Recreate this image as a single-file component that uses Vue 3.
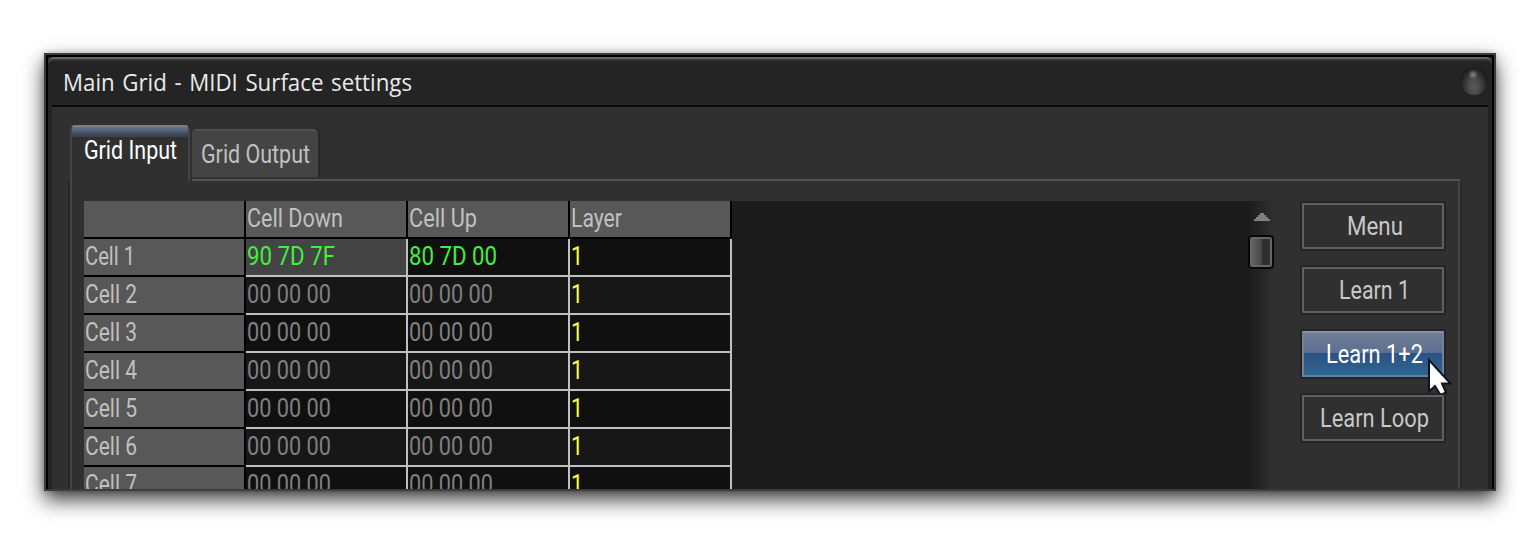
<script setup>
import { h } from 'vue'

// Text run condensed or widened to a fixed width
const Label = (p) =>
  h('svg', { class: 'label', width: p.w, height: 36 }, [
    h('text', { x: 0, y: 26, textLength: p.w, lengthAdjust: 'spacingAndGlyphs' }, p.t),
  ])
Label.props = ['t', 'w']

const rows = [1, 2, 3, 4, 5, 6, 7].map((n) => ({
  name: `Cell ${n}`,
  width: n === 1 ? 50 : 52,
  down: n === 1 ? '90 7D 7F' : '00 00 00',
  up: n === 1 ? '80 7D 00' : '00 00 00',
  set: n === 1,
}))
const headers = [
  { t: 'Cell Down', w: 96 },
  { t: 'Cell Up', w: 68 },
  { t: 'Layer', w: 51 },
]
const buttons = [
  { t: 'Menu', w: 56 },
  { t: 'Learn 1', w: 71 },
  { t: 'Learn 1+2', w: 97, on: true },
  { t: 'Learn Loop', w: 109 },
]
</script>

<template>
  <div class="stage">
    <div class="window">
      <div class="frame">
        <header class="titlebar">
          <Label class="title" t="Main Grid - MIDI Surface settings" :w="349" />
          <span class="orb"></span>
        </header>
        <main class="body">
          <div class="tabs">
            <div class="tab active"><Label t="Grid Input" :w="93" /></div>
            <div class="tabrest">
              <div class="tab idle"><Label t="Grid Output" :w="109" /></div>
            </div>
          </div>
          <div class="panel">
            <div class="list">
              <div class="grid">
                <div class="row head">
                  <div class="cell name"></div>
                  <div v-for="c in headers" :key="c.t" class="cell"><Label :t="c.t" :w="c.w" /></div>
                </div>
                <div v-for="(r, i) in rows" :key="r.name" class="row" :class="{ even: i % 2, set: r.set }">
                  <div class="cell name"><Label :t="r.name" :w="r.width" /></div>
                  <div class="cell val" :class="{ selected: r.set }"><Label :t="r.down" :w="r.set ? 88 : 84" /></div>
                  <div class="cell val"><Label :t="r.up" :w="r.set ? 88 : 84" /></div>
                  <div class="cell layer"><Label t="1" :w="12" /></div>
                </div>
              </div>
              <div class="scroll">
                <svg class="arrow" width="16" height="8"><path d="M0 8V6H2V4H4V2H6V0H10V2H12V4H14V6H16V8Z" fill="#808080" /></svg>
                <div class="thumb"></div>
              </div>
            </div>
            <div class="buttons">
              <button v-for="b in buttons" :key="b.t" :class="{ on: b.on }">
                <Label :t="b.t" :w="b.w" />
                <svg v-if="b.on" class="cursor" width="26" height="40" viewBox="0 0 26 40">
                  <path d="M2 2V33.500L8 28L13.500 37L19 34.500L15 25.500H23.500Z" fill="#fff" stroke="#11111f" stroke-width="2" />
                </svg>
              </button>
            </div>
          </div>
        </main>
      </div>
    </div>
  </div>
</template>

<style>
body { background: #fff; overflow: hidden; }
</style>

<style scoped>
* { box-sizing: border-box; }
.stage { width: 1540px; height: 542px; padding: 53px 44px 51px; background: #fff; overflow: hidden; }
.window {
  height: 438px; border: 2px solid #3c3c3c; background: #000;
  box-shadow: 0 9px 19px rgba(0, 0, 0, .75), 0 0 6px rgba(0, 0, 0, .2);
}
.frame {
  height: 434px; border: solid #000; border-width: 2px 2px 0;
  display: flex; flex-direction: column; background: #242424; overflow: hidden;
}
:deep(.label) { display: block; flex: none; overflow: visible; fill: currentColor; font: 25px Roboto, "Liberation Sans", sans-serif; }
.titlebar {
  flex: none; height: 48px; display: flex; justify-content: space-between; align-items: flex-start;
  padding: 8px 4px 0 15px; color: #eaeaea; border-top: 2px solid #666;
  border-radius: 6px 6px 0 0; box-shadow: inset 0 2px #353535;
}
.titlebar :deep(.label) { font-family: "Open Sans", "Noto Sans", sans-serif; font-size: 24.5px; margin-top: -2px; word-spacing: 2px; }
.orb {
  width: 28px; height: 28px; border-radius: 50%;
  background: radial-gradient(circle at 47% 28%, #8a8a8a 0, #666 2px, transparent 5px),
    radial-gradient(ellipse at 50% 70%, #5a5a5a 0, #484848 30%, #1c1c1c 72%);
}
.body { flex: 1; min-height: 0; margin: 0 4px; padding: 18px 28px 0 16px; background: #303030; border-top: 2px solid #0a0a0a; }
.tabs { display: flex; gap: 2px; height: 56px; margin-left: 2px; }
.tab { display: flex; }
.active {
  width: 120px; padding: 6px 0 0 12px; color: #fff; border: solid #444; border-width: 2px 2px 0; border-top-color: #807d7d;
  border-radius: 5px 5px 0 0; background: linear-gradient(#65718d, #53617d 4px, #424a56 7px, #394048 10px, #303030 10px);
}
.tabrest { flex: 1; border-bottom: 2px solid #555; padding-top: 4px; }
.idle {
  width: 126px; height: 48px; padding: 6px 0 0 9px; color: #c0c0c0; background: #444; border-top: 2px solid #505050;
  border-radius: 5px 5px 0 0; box-shadow: 2px 0 #282828;
}
.panel {
  height: 310px; margin-left: 2px; border: solid #444; border-width: 0 2px; box-shadow: -2px 0 #262626, 2px 0 #2a2a2a;
  padding: 20px 14px 0 12px; display: flex; justify-content: space-between; align-items: flex-start;
}
.list { width: 1190px; height: 290px; display: flex; justify-content: space-between; background: #1b1b1b; }
.grid { width: 648px; }
.row { display: grid; grid-template-columns: repeat(4, 162px); height: 38px; color: #808080; background: #101010; }
.even { background: #171717; }
.cell { padding-left: 1px; border: solid #c0c0c0; border-width: 0 2px 2px 0; }
.head .cell, .name { color: #c0c0c0; background: #585858; border-color: #000; }
.set .val { color: #40f040; }
.set .selected { background: #444; }
.row .layer { color: #ffff40; }
.scroll { width: 26px; display: flex; flex-direction: column; align-items: center; padding-top: 12px; background: linear-gradient(90deg, #1b1b1b, #303030); }
.arrow { display: block; margin: 0 0 14px 2px; }
.thumb {
  width: 26px; height: 34px; border: 2px solid #080808; border-radius: 4px;
  background: linear-gradient(90deg, #696969, #444 55%, #2d2d2d 55%, #333);
  box-shadow: inset 0 0 0 2px #666;
}
.buttons { display: flex; flex-direction: column; gap: 18px; padding-top: 2px; width: 142px; }
button {
  position: relative; width: 142px; height: 46px; margin: 0; padding: 4px 0 0 3px; display: flex; justify-content: center; align-items: flex-start;
  color: #c8c8c8; background: #303030; border: 2px solid #606060; border-radius: 1px; box-shadow: 0 0 0 2px #242424;
}
.on { color: #fff; border-color: #8792a5 #748299 #5a86a5; background: linear-gradient(#6f7d93, #5d6f92 20px, #2a5181 20px, #306591); }
.cursor { position: absolute; left: 123px; top: 25px; overflow: visible; }
</style>
